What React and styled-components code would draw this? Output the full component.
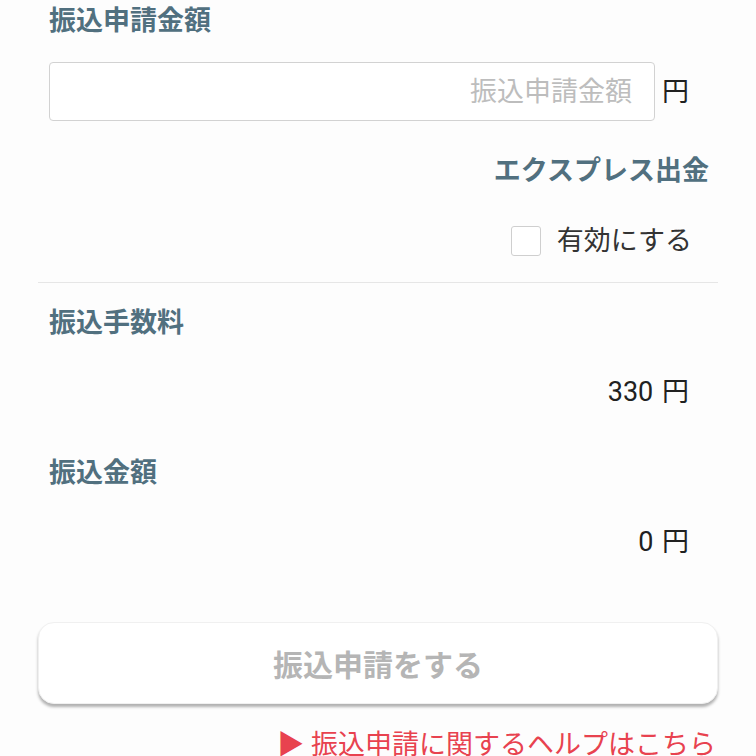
import React from "react";
import styled, { createGlobalStyle } from "styled-components";

const Global = createGlobalStyle`
  html, body { margin: 0; padding: 0; background: #fdfdfd; }
  body { font-family: Roboto, "Noto Sans CJK JP", sans-serif; color: #212121; }
  * { box-sizing: border-box; }
`;

const Page = styled.div`
  width: 756px;
  height: 756px;
  overflow: hidden;
  padding: 4px 38px 0;
`;

const Section = styled.div`
  padding: 0 11px;
`;

const Heading = styled.div`
  font-size: 27px;
  line-height: 34px;
  font-weight: 700;
  color: #51707f;
  margin-top: ${(p) => p.$mt || 0}px;
  text-align: ${(p) => (p.$right ? "right" : "left")};
  margin-right: ${(p) => (p.$right ? "-2px" : "0")};
`;

const InputRow = styled.div`
  display: flex;
  align-items: center;
  margin-top: 24px;
  padding-right: 18px;
`;

const AmountInput = styled.input`
  flex: 1;
  height: 59px;
  border: 1.5px solid #d2d2d2;
  border-radius: 4px;
  background: #fff;
  font-family: Roboto, "Noto Sans CJK JP", sans-serif;
  font-size: 27px;
  text-align: right;
  padding: 0 22px;
  outline: none;
  &::placeholder { color: #bdbdbd; }
`;

const Unit = styled.span`
  font-size: 27px;
  line-height: 34px;
  margin-left: 7px;
  color: #212121;
`;

const CheckRow = styled.label`
  display: flex;
  justify-content: flex-end;
  align-items: center;
  gap: 16px;
  margin-top: 36px;
  padding-right: 15px;
  height: 34px;
`;

const Box = styled.span`
  width: 30px;
  height: 30px;
  border: 1.5px solid #cfcfcf;
  border-radius: 3px;
  background: #fff;
`;

const CheckText = styled.span`
  font-size: 27px;
  line-height: 34px;
  color: #333;
`;

const Divider = styled.hr`
  border: none;
  border-top: 1px solid #e6e6e6;
  margin: 24px 0 0;
`;

const Value = styled.div`
  font-size: 27px;
  line-height: 34px;
  text-align: right;
  padding-right: 18px;
  margin-top: 35px;
  color: #212121;
  word-spacing: 2px;
`;

const SubmitButton = styled.button`
  display: block;
  width: 100%;
  height: 82px;
  margin-top: 63px;
  border: 1px solid #f0f0f0;
  border-radius: 16px;
  background: #fff;
  box-shadow: 0 3px 3px rgba(0, 0, 0, 0.3);
  font-family: Roboto, "Noto Sans CJK JP", sans-serif;
  font-size: 30px;
  font-weight: 700;
  color: #b5b5b5;
`;

const HelpLink = styled.a`
  display: block;
  margin-top: 24px;
  text-align: right;
  font-size: 27px;
  line-height: 34px;
  color: #e8424f;
  text-decoration: none;
  padding-right: 2px;
`;

export default function App() {
  return (
    <Page>
      <Global />
      <Section>
        <Heading>振込申請金額</Heading>
        <InputRow>
          <AmountInput placeholder="振込申請金額" />
          <Unit>円</Unit>
        </InputRow>
        <Heading $right $mt={33}>エクスプレス出金</Heading>
        <CheckRow>
          <Box />
          <CheckText>有効にする</CheckText>
        </CheckRow>
      </Section>
      <Divider />
      <Section>
        <Heading $mt={23}>振込手数料</Heading>
        <Value>330 円</Value>
        <Heading $mt={47}>振込金額</Heading>
        <Value>0 円</Value>
      </Section>
      <SubmitButton>振込申請をする</SubmitButton>
      <HelpLink href="#">▶ 振込申請に関するヘルプはこちら</HelpLink>
    </Page>
  );
}
